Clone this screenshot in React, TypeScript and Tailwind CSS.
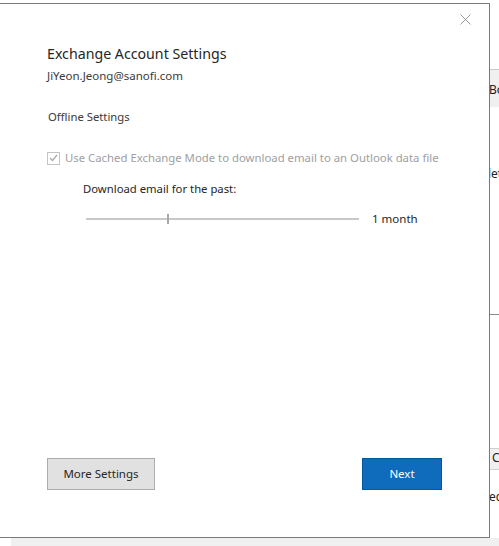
import React from 'react';

const font = { fontFamily: '"Noto Sans", "Open Sans", sans-serif' };

function CloseIcon() {
  return (
    <svg width="11" height="11" viewBox="0 0 11 11" className="block">
      <path d="M0.5 0.5 L10.5 10.5 M10.5 0.5 L0.5 10.5" stroke="#9a9a9a" strokeWidth="1" fill="none" />
    </svg>
  );
}

function CheckBox() {
  return (
    <div className="w-[13px] h-[13px] border border-[#c4c4c4] bg-white flex items-center justify-center shrink-0">
      <svg width="9" height="8" viewBox="0 0 9 8">
        <path d="M1 4 L3.5 6.5 L8 1" stroke="#a8a8a8" strokeWidth="1.2" fill="none" />
      </svg>
    </div>
  );
}

export default function App() {
  return (
    <div className="relative w-[499px] h-[546px] overflow-hidden bg-white" style={font}>
      {/* background window peeking out on the right */}
      <div className="absolute left-[490px] top-0 w-[9px] h-[546px] overflow-hidden">
        <div className="absolute left-0 top-[69px] w-[9px] h-[38px] bg-[#f0f0f0] border-t border-[#c8c8c8]" />
        <div className="absolute left-[-1px] top-[84px] text-[12px] text-[#222] leading-none">Bo</div>
        <div className="absolute left-[-2px] top-[168px] text-[12px] text-[#222] leading-none">let</div>
        <div className="absolute left-0 top-[314px] w-[9px] h-px bg-[#8a8a8a]" />
        <div className="absolute left-0 top-[448px] w-[9px] h-[22px] bg-[#f0f0f0] border-y border-[#d0d0d0]" />
        <div className="absolute left-[2px] top-[452px] text-[12px] text-[#222] leading-none">C</div>
        <div className="absolute left-[-1px] top-[491px] text-[12px] text-[#222] leading-none">ec</div>
      </div>
      <div className="absolute left-[11px] top-[538px] w-[488px] h-[8px] bg-[#f0f0f0]" />

      {/* dialog */}
      <div className="relative mt-[3px] w-[490px] h-[535px] bg-white border-t border-r border-b border-[#7a7a7a] flex flex-col">
        <div className="flex justify-end pt-[10px] pr-[18px]">
          <CloseIcon />
        </div>
        <div className="pl-[47px] pt-[19px]">
          <h1 className="text-[14.2px] text-[#262626] leading-[20px]">Exchange Account Settings</h1>
          <p className="mt-[4px] text-[11.5px] text-[#3a3a3a] leading-[16px]">JiYeon.Jeong@sanofi.com</p>
          <p className="mt-[25px] ml-px text-[11.3px] text-[#3a3a3a] leading-[16px]">Offline Settings</p>
          <div className="mt-[25px] flex items-center gap-[5px]">
            <CheckBox />
            <span className="text-[11.35px] text-[#a0a0a0] leading-[16px]">
              Use Cached Exchange Mode to download email to an Outlook data file
            </span>
          </div>
          <div className="pl-[36px]">
            <p className="mt-[15px] text-[11.3px] text-[#262626] leading-[16px]">Download email for the past:</p>
            <div className="mt-[14px] flex items-center">
              <div className="relative w-[273px] h-[10px] ml-[3px] flex items-center">
                <div className="w-full h-[2px] bg-[#c8c8c8]" />
                <div className="absolute left-[81px] top-0 w-[2px] h-[10px] bg-[#a8a8a8]" />
              </div>
              <span className="ml-[13px] text-[11.5px] text-[#262626] leading-[16px]">1 month</span>
            </div>
          </div>
        </div>
        <div className="mt-auto mb-[47px] flex justify-between pl-[47px] pr-[47px]">
          <button className="w-[108px] h-[32px] bg-[#e1e1e1] border border-[#adadad] text-[11.5px] text-[#262626]">
            More Settings
          </button>
          <button className="w-[80px] h-[32px] bg-[#0f6cbd] border border-[#005a9e] text-[11.5px] text-white">
            Next
          </button>
        </div>
      </div>
    </div>
  );
}
